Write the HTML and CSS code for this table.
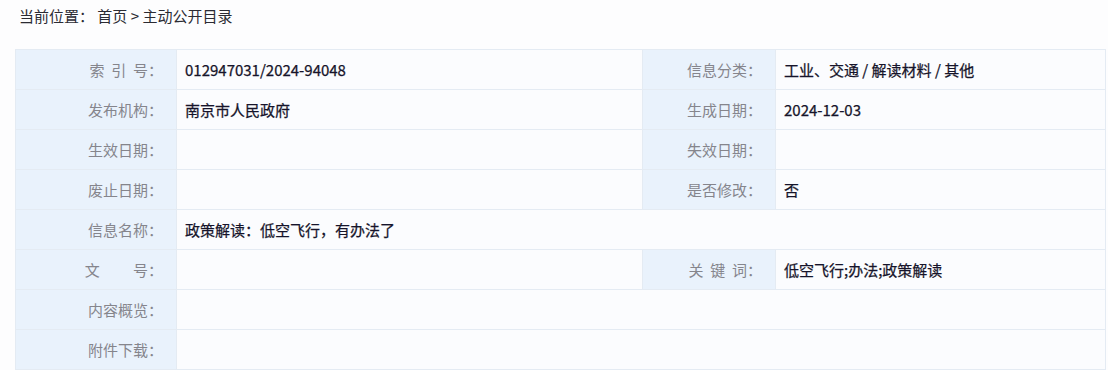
FILE: index.html
```html
<!DOCTYPE html>
<html lang="zh-CN">
<head>
<meta charset="utf-8">
<link rel="stylesheet" href="styles.css">
</head>
<body>
<div class="page">
  <div class="crumb">当前位置： 首页 &gt; 主动公开目录</div>
  <table class="info">
    <colgroup>
      <col class="c1"><col class="c2"><col class="c3"><col class="c4">
    </colgroup>
    <tr>
      <th>索&nbsp;&nbsp;引&nbsp;&nbsp;号：</th><td>012947031/2024-94048</td>
      <th>信息分类：</th><td>工业、交通 / 解读材料 / 其他</td>
    </tr>
    <tr>
      <th>发布机构：</th><td>南京市人民政府</td>
      <th>生成日期：</th><td>2024-12-03</td>
    </tr>
    <tr>
      <th>生效日期：</th><td></td>
      <th>失效日期：</th><td></td>
    </tr>
    <tr>
      <th>废止日期：</th><td></td>
      <th>是否修改：</th><td>否</td>
    </tr>
    <tr>
      <th>信息名称：</th><td colspan="3">政策解读：低空飞行，有办法了</td>
    </tr>
    <tr>
      <th>文　　&nbsp;号：</th><td></td>
      <th>关&nbsp;&nbsp;键&nbsp;&nbsp;词：</th><td>低空飞行;办法;政策解读</td>
    </tr>
    <tr>
      <th>内容概览：</th><td colspan="3"></td>
    </tr>
    <tr>
      <th>附件下载：</th><td colspan="3"></td>
    </tr>
  </table>
</div>
</body>
</html>
```
FILE: styles.css
```css
html, body {
  margin: 0;
  padding: 0;
  background: #fdfdfe;
}
body {
  font-family: "Noto Sans CJK SC", "Noto Sans", sans-serif;
  font-size: 15px;
}
.page {
  padding: 0 3px 0 15px;
  width: 1090px;
}
.crumb {
  height: 49px;
  line-height: 32px;
  padding-left: 4px;
  color: #2b2b33;
}
.info {
  border-collapse: collapse;
  table-layout: fixed;
  width: 1090px;
  border: 1px solid #e4ebf3;
}
.c1 { width: 161px; }
.c2 { width: 466px; }
.c3 { width: 133px; }
.c4 { width: 330px; }
.info th, .info td {
  height: 39px;
  padding: 0;
  border: 1px solid #e4ebf3;
  font-weight: normal;
}
.info th {
  background: #e9f2fc;
  color: #85858c;
  text-align: right;
  padding-right: 13px;
  white-space: nowrap;
}
.info td {
  background: #fbfcfe;
  color: #16142a;
  text-align: left;
  padding-left: 8px;
  -webkit-text-stroke: 0.25px #16142a;
}
```
